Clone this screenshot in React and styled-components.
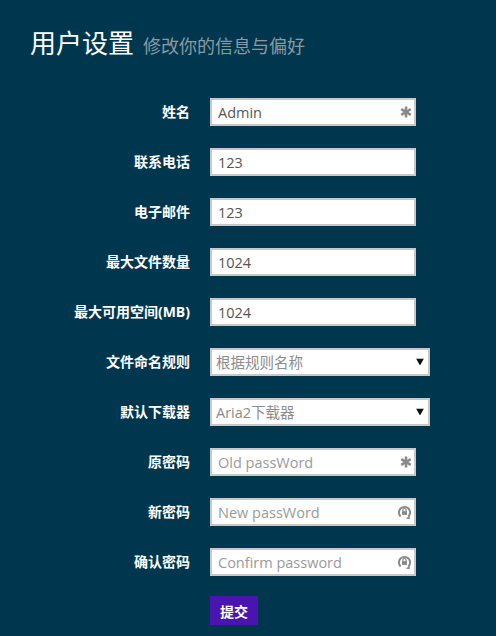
import styled, { createGlobalStyle } from "styled-components";

const GlobalStyle = createGlobalStyle`
  html, body {
    margin: 0;
    padding: 0;
    background: #01374e;
  }
  body {
    font-family: "Open Sans", "Noto Sans CJK SC", sans-serif;
  }
`;

const Page = styled.div`
  width: 496px;
  min-height: 636px;
  background: #01374e;
  box-sizing: border-box;
  padding: 26px 0 0 30px;
`;

const Header = styled.h1`
  margin: 0 0 35px;
  font-weight: 400;
  font-size: 26px;
  line-height: 34px;
  color: #ffffff;
  display: flex;
  align-items: baseline;
  gap: 9px;
`;

const Small = styled.small`
  font-size: 18px;
  color: #8a9aa3;
`;

const Form = styled.form`
  display: grid;
  grid-template-columns: 160px auto;
  column-gap: 20px;
  row-gap: 22px;
  align-items: center;
  justify-content: start;
`;

const Label = styled.label`
  text-align: right;
  color: #ffffff;
  font-size: 14px;
  font-weight: 700;
  line-height: 28px;
`;

const Field = styled.div`
  position: relative;
  width: ${(p) => p.$width}px;
  height: 28px;
`;

const Input = styled.input`
  box-sizing: border-box;
  width: 100%;
  height: 100%;
  border: 2px solid #c8c8c8;
  background: #fff;
  padding: 0 26px 0 6px;
  font-family: "Open Sans", "Noto Sans CJK SC", sans-serif;
  font-size: 14.5px;
  color: #555;
  outline: none;
  &::placeholder {
    color: #9a9a9a;
  }
`;

const Select = styled.select`
  box-sizing: border-box;
  width: 100%;
  height: 100%;
  border: 2px solid #c8c8c8;
  background: #fff;
  padding: 0 4px;
  font-family: "Open Sans", "Noto Sans CJK SC", sans-serif;
  font-size: 14.5px;
  color: #8c8c8c;
  appearance: none;
  outline: none;
`;

const Icon = styled.span`
  position: absolute;
  right: ${(p) => p.$right || 5}px;
  top: 50%;
  transform: translateY(-50%);
  display: flex;
  pointer-events: none;
`;

const Submit = styled.button`
  grid-column: 2;
  justify-self: start;
  width: 48px;
  height: 29px;
  margin-top: -2px;
  border: none;
  background: #4a14b0;
  color: #fff;
  font-weight: 700;
  font-size: 14px;
  font-family: "Noto Sans CJK SC", sans-serif;
  padding: 0;
`;

const Asterisk = () => (
  <svg width="12" height="12" viewBox="0 0 12 12">
    <g stroke="#8a8a8a" strokeWidth="2.6" strokeLinecap="butt">
      <line x1="6" y1="0.5" x2="6" y2="11.5" />
      <line x1="1.2" y1="3.2" x2="10.8" y2="8.8" />
      <line x1="1.2" y1="8.8" x2="10.8" y2="3.2" />
    </g>
  </svg>
);

const LockCycle = () => (
  <svg width="15" height="15" viewBox="0 0 15 15">
    <path
      d="M3.6 12 A5.6 5.6 0 1 1 11.4 12"
      fill="none"
      stroke="#8a8a8a"
      strokeWidth="2"
    />
    <path d="M8.8 14.2 L12.6 11 L12.8 14.6 Z" fill="#8a8a8a" />
    <rect x="5" y="6.6" width="5" height="3.8" fill="#8a8a8a" />
    <path
      d="M5.9 6.8 V5.6 a1.6 1.6 0 0 1 3.2 0 V6.8"
      fill="none"
      stroke="#8a8a8a"
      strokeWidth="1.2"
    />
  </svg>
);

const Caret = () => (
  <svg width="8" height="7" viewBox="0 0 8 7">
    <path d="M0 0 H8 L4 7 Z" fill="#111" />
  </svg>
);

const rows = [
  { label: "姓名", value: "Admin", icon: "star" },
  { label: "联系电话", value: "123" },
  { label: "电子邮件", value: "123" },
  { label: "最大文件数量", value: "1024" },
  { label: "最大可用空间(MB)", value: "1024" },
  { label: "文件命名规则", select: "根据规则名称" },
  { label: "默认下载器", select: "Aria2下载器" },
  { label: "原密码", placeholder: "Old passWord", icon: "star" },
  { label: "新密码", placeholder: "New passWord", icon: "lock" },
  { label: "确认密码", placeholder: "Confirm password", icon: "lock" },
];

export default function App() {
  return (
    <Page>
      <GlobalStyle />
      <Header>
        用户设置 <Small>修改你的信息与偏好</Small>
      </Header>
      <Form onSubmit={(e) => e.preventDefault()}>
        {rows.map((r) => (
          <Row key={r.label} row={r} />
        ))}
        <Submit type="submit">提交</Submit>
      </Form>
    </Page>
  );
}

function Row({ row }) {
  return (
    <>
      <Label>{row.label}</Label>
      {row.select ? (
        <Field $width={220}>
          <Select defaultValue={row.select}>
            <option>{row.select}</option>
          </Select>
          <Icon $right={6}>
            <Caret />
          </Icon>
        </Field>
      ) : (
        <Field $width={206}>
          <Input
            type={row.placeholder ? "password" : "text"}
            defaultValue={row.value}
            placeholder={row.placeholder}
          />
          {row.icon && (
            <Icon $right={4}>{row.icon === "star" ? <Asterisk /> : <LockCycle />}</Icon>
          )}
        </Field>
      )}
    </>
  );
}
